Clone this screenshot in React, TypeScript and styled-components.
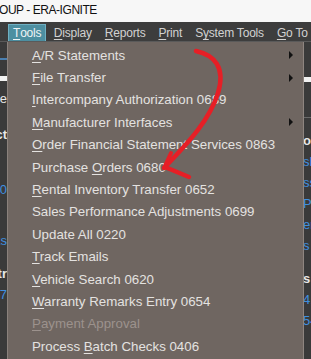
import styled, { createGlobalStyle } from 'styled-components';

const GlobalStyle = createGlobalStyle`
  html, body {
    margin: 0;
    padding: 0;
    width: 311px;
    height: 359px;
    overflow: hidden;
    background: #3a3a3a;
    font-family: "Liberation Sans", Arial, sans-serif;
  }
`;

const Screen = styled.div`
  display: flex;
  flex-direction: column;
  width: 311px;
  height: 359px;
  overflow: hidden;
`;

const TitleBar = styled.div`
  height: 22px;
  background: #f7f7f7;
  color: #111;
  font-size: 12px;
  letter-spacing: -0.45px;
  display: flex;
  align-items: center;
  padding-bottom: 2px;
  box-sizing: border-box;
  margin-left: -1px;
`;

const MenuBar = styled.div`
  height: 19px;
  background: #3d3d3d;
  display: flex;
  align-items: stretch;
  font-size: 12px;
  letter-spacing: -0.2px;
  color: #d6d6d6;
  border-bottom: 1px solid #5a5a5a;
`;

const Clipped = styled.span`
  width: 5px;
  overflow: hidden;
  display: flex;
  justify-content: flex-end;
  align-items: center;
  color: #b89a7a;
  margin-right: 8px;
`;

const BarItem = styled.span<{ $active?: boolean }>`
  display: flex;
  align-items: center;
  padding: 0 ${(p) => (p.$active ? 4 : 5.5)}px;
  margin-right: ${(p) => (p.$active ? 1 : 0)}px;
  margin-top: 2px;
  background: ${(p) => (p.$active ? '#4d8fa1' : 'transparent')};
  border: 1px solid ${(p) => (p.$active ? '#6fb0c2' : 'transparent')};
  border-bottom: none;
  color: ${(p) => (p.$active ? '#eef4f6' : '#d2d2d2')};
  white-space: nowrap;
`;

const Workspace = styled.div`
  position: relative;
  flex: 1;
  display: flex;
  background: #3a3a3a;
`;

const SidePane = styled.div<{ $side: 'left' | 'right' }>`
  width: ${(p) => (p.$side === 'left' ? 7 : 8)}px;
  margin-left: ${(p) => (p.$side === 'left' ? 0 : 'auto')};
  display: flex;
  flex-direction: column;
  align-items: ${(p) => (p.$side === 'left' ? 'flex-end' : 'flex-start')};
  overflow: hidden;
  font-size: 13px;
`;

const PaneLine = styled.div<{ $h: number; $bg?: string }>`
  height: ${(p) => p.$h}px;
  width: 100%;
  background: ${(p) => p.$bg ?? 'transparent'};
  flex-shrink: 0;
`;

const PaneText = styled.div<{ $blue?: boolean; $bold?: boolean; $h?: number }>`
  height: ${(p) => p.$h ?? 21}px;
  line-height: ${(p) => p.$h ?? 21}px;
  white-space: nowrap;
  flex-shrink: 0;
  color: ${(p) => (p.$blue ? '#3f8fe0' : '#e8e8e8')};
  font-weight: ${(p) => (p.$bold ? 700 : 400)};
`;

const Dropdown = styled.div`
  position: absolute;
  left: 7px;
  top: 0;
  width: 295px;
  height: 330px;
  background: #6f6661;
  border-left: 1px solid #8a817c;
  border-right: 1px solid #8e8580;
  padding-top: 2px;
  display: flex;
  flex-direction: column;
  font-size: 13.3px;
`;

const Item = styled.div<{ $disabled?: boolean }>`
  height: 22.4px;
  display: flex;
  align-items: center;
  padding-left: 24px;
  padding-right: 10px;
  color: ${(p) => (p.$disabled ? '#9c928d' : '#e4e2e0')};
  white-space: nowrap;
`;

const Label = styled.span`
  flex: 1;
`;

const Key = styled.span`
  text-decoration: underline;
  text-underline-offset: 2px;
`;

const SubArrow = styled.span`
  width: 0;
  height: 0;
  border-top: 4px solid transparent;
  border-bottom: 4px solid transparent;
  border-left: 4px solid #111;
`;

const Annotation = styled.svg`
  position: absolute;
  left: 0;
  top: 0;
  pointer-events: none;
`;

type MenuEntry = { pre: string; key?: string; post: string; sub?: boolean; disabled?: boolean };

const entries: MenuEntry[] = [
  { pre: '', key: 'A', post: '/R Statements', sub: true },
  { pre: '', key: 'F', post: 'ile Transfer', sub: true },
  { pre: '', key: 'I', post: 'ntercompany Authorization 0689' },
  { pre: '', key: 'M', post: 'anufacturer Interfaces', sub: true },
  { pre: '', key: 'O', post: 'rder Financial Statement Services 0863' },
  { pre: 'Purchase ', key: 'O', post: 'rders 0680' },
  { pre: '', key: 'R', post: 'ental Inventory Transfer 0652' },
  { pre: 'Sales Performance Adjustments 0699', post: '' },
  { pre: 'Update All 0220', post: '' },
  { pre: '', key: 'T', post: 'rack Emails' },
  { pre: '', key: 'V', post: 'ehicle Search 0620' },
  { pre: '', key: 'W', post: 'arranty Remarks Entry 0654' },
  { pre: '', key: 'P', post: 'ayment Approval', disabled: true },
  { pre: 'Process ', key: 'B', post: 'atch Checks 0406' },
];

export default function App() {
  return (
    <Screen>
      <GlobalStyle />
      <TitleBar>OUP - ERA-IGNITE</TitleBar>
      <MenuBar>
        <Clipped>ls</Clipped>
        <BarItem $active>
          <Key>T</Key>ools
        </BarItem>
        <BarItem>
          <Key>D</Key>isplay
        </BarItem>
        <BarItem>
          <Key>R</Key>eports
        </BarItem>
        <BarItem>
          <Key>P</Key>rint
        </BarItem>
        <BarItem>
          S<Key>y</Key>stem Tools
        </BarItem>
        <BarItem>
          <Key>G</Key>o To
        </BarItem>
      </MenuBar>
      <Workspace>
        <SidePane $side="left">
          <PaneLine $h={16} />
          <PaneLine $h={2} $bg="#4a7fb0" />
          <PaneLine $h={16} />
          <PaneLine $h={5} $bg="#f2f2f2" />
          <PaneLine $h={8} />
          <PaneText $h={20}>Type</PaneText>
          <PaneLine $h={15} />
          <PaneText $bold>Contact</PaneText>
          <PaneLine $h={34} />
          <PaneText $blue>Phone 0</PaneText>
          <PaneLine $h={30} />
          <PaneText $blue>Links</PaneText>
          <PaneLine $h={12} />
          <PaneText $bold>Entr</PaneText>
          <PaneText $blue>07</PaneText>
        </SidePane>
        <SidePane $side="right">
          <PaneLine $h={35} />
          <PaneLine $h={5} $bg="#f2f2f2" />
          <PaneLine $h={35} />
          <PaneLine $h={1} $bg="#6a6a6a" />
          <PaneLine $h={12} />
          <PaneText $bold>ol</PaneText>
          <PaneText $blue>sh</PaneText>
          <PaneText $blue>ss</PaneText>
          <PaneText $blue>Pr</PaneText>
          <PaneText $blue>er</PaneText>
          <PaneText $blue>s (</PaneText>
          <PaneLine $h={12} />
          <PaneText $bold>s</PaneText>
          <PaneText $blue>4,</PaneText>
          <PaneText $blue>54</PaneText>
        </SidePane>
        <Dropdown>
          {entries.map((e, i) => (
            <Item key={i} $disabled={e.disabled}>
              <Label>
                {e.pre}
                {e.key && <Key>{e.key}</Key>}
                {e.post}
              </Label>
              {e.sub && <SubArrow />}
            </Item>
          ))}
        </Dropdown>
        <Annotation width="311" height="318" viewBox="0 41 311 318">
          <path
            d="M196 50 C 214 54, 226 66, 218 92 C 210 118, 190 140, 164 167"
            fill="none"
            stroke="#e61f26"
            strokeWidth="4.5"
            strokeLinecap="round"
          />
          <path
            d="M165 166 L 189 176"
            fill="none"
            stroke="#e61f26"
            strokeWidth="4.5"
            strokeLinecap="round"
          />
          <path
            d="M164 167 L 171 152"
            fill="none"
            stroke="#e61f26"
            strokeWidth="4"
            strokeLinecap="round"
          />
        </Annotation>
      </Workspace>
    </Screen>
  );
}
